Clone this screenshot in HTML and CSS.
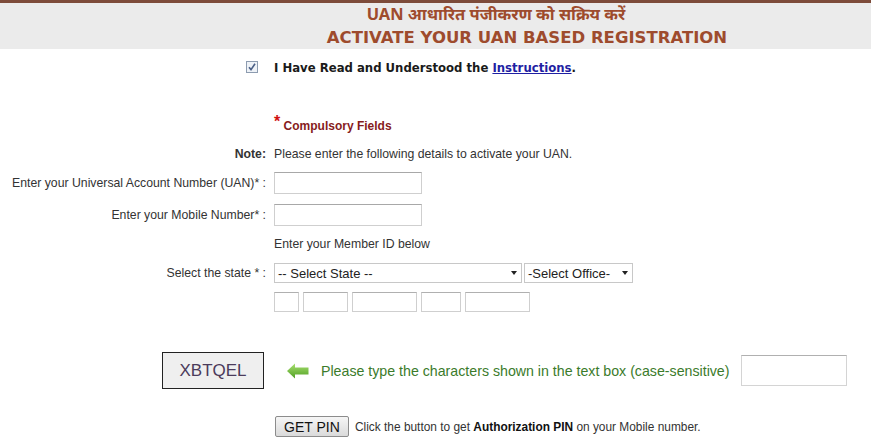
FILE: index.html
```html
<!DOCTYPE html>
<html lang="en">
<head>
<meta charset="utf-8">
<title>Activate UAN</title>
<link rel="stylesheet" href="styles.css">
</head>
<body>
<div class="header">
  <div class="hi">UAN आधारित पंजीकरण को सक्रिय करें</div>
  <div class="en">ACTIVATE YOUR UAN BASED REGISTRATION</div>
</div>

<div class="row agree-row">
  <div class="lbl">
    <span class="check"><svg width="12" height="12" viewBox="0 0 12 12"><rect x="0.5" y="0.5" width="11" height="11" fill="#eef2f7" stroke="#8d9cb0"/><path d="M3 6.2 L5 8.6 L9 2.8" fill="none" stroke="#4a5f86" stroke-width="1.6"/></svg></span>
  </div>
  <div class="val agree">I Have Read and Understood the <a href="#">Instructions</a>.</div>
</div>

<div class="row compulsory-row">
  <div class="lbl"></div>
  <div class="val compulsory"><span class="ast">*</span> Compulsory Fields</div>
</div>

<div class="row note-row">
  <div class="lbl note">Note:</div>
  <div class="val">Please enter the following details to activate your UAN.</div>
</div>

<div class="row field-row">
  <div class="lbl">Enter your Universal Account Number (UAN)* :</div>
  <div class="val"><input class="text" type="text"></div>
</div>

<div class="row field-row">
  <div class="lbl">Enter your Mobile Number* :</div>
  <div class="val"><input class="text" type="text"></div>
</div>

<div class="row member-row">
  <div class="lbl"></div>
  <div class="val">Enter your Member ID below</div>
</div>

<div class="row state-row">
  <div class="lbl">Select the state * :</div>
  <div class="val selects">
    <div class="select state"><span>-- Select State --</span><i class="tri"></i></div>
    <div class="select office"><span>-Select Office-</span><i class="tri"></i></div>
  </div>
</div>

<div class="row ids-row">
  <div class="lbl"></div>
  <div class="val ids">
    <input class="idbox w1" type="text">
    <input class="idbox w2" type="text">
    <input class="idbox w3" type="text">
    <input class="idbox w4" type="text">
    <input class="idbox w5" type="text">
  </div>
</div>

<div class="captcha-row">
  <div class="captcha">XBTQEL</div>
  <svg class="arrow" width="22" height="16" viewBox="0 0 22 16">
    <defs>
      <linearGradient id="g" x1="0" y1="0" x2="0" y2="1">
        <stop offset="0" stop-color="#a8e070"/>
        <stop offset="1" stop-color="#4f9e22"/>
      </linearGradient>
    </defs>
    <path d="M0 8 L8 0.5 L8 4.5 L21.5 4.5 L21.5 11.5 L8 11.5 L8 15.5 Z" fill="url(#g)"/>
  </svg>
  <div class="captcha-text">Please type the characters shown in the text box (case-sensitive)</div>
  <input class="captcha-input" type="text">
</div>

<div class="row pin-row">
  <div class="lbl"></div>
  <div class="val pin">
    <button class="btn" type="button">GET PIN</button>
    <span class="pin-text">Click the button to get <b>Authorization PIN</b> on your Mobile number.</span>
  </div>
</div>
</body>
</html>
```

FILE: styles.css
```css
body {
  margin: 0;
  background: #fff;
  font-family: "Liberation Sans", Arial, sans-serif;
  font-size: 12.25px;
  color: #333;
}

.header {
  box-sizing: border-box;
  border-top: 3px solid #7d4b3a;
  background: #ebebeb;
  height: 49px;
  padding: 2px 0 0 183px;
  display: flex;
  flex-direction: column;
  align-items: center;
  color: #9e4b2d;
  font-weight: bold;
  font-family: "DejaVu Sans", Verdana, sans-serif;
}

.hi {
  font-size: 16.5px;
  line-height: 22px;
  margin-right: 62px;
  font-family: "Noto Sans Devanagari", "Lohit Devanagari", "DejaVu Sans", sans-serif;
}

.en {
  font-size: 16.5px;
  line-height: 22px;
}

.row {
  display: flex;
  align-items: center;
}

.lbl {
  width: 266px;
  flex: none;
  text-align: right;
  white-space: nowrap;
}

.val {
  margin-left: 8px;
  white-space: nowrap;
}

.agree-row {
  margin-top: 11px;
  height: 16px;
}

.check {
  display: inline-flex;
  padding-right: 8px;
}

.agree {
  font-family: "DejaVu Sans", Verdana, sans-serif;
  font-weight: bold;
  font-size: 11.7px;
  color: #1a1a1a;
}

.agree a {
  color: #1f1fa3;
}

.compulsory-row {
  margin-top: 41px;
  height: 16px;
}

.compulsory {
  color: #861c1c;
  font-weight: bold;
  font-size: 12px;
}

.ast {
  color: #d01010;
  font-size: 16px;
  position: relative;
  top: -3px;
}

.note-row {
  margin-top: 13px;
  height: 16px;
}

.note {
  font-weight: bold;
}

.field-row {
  margin-top: 10px;
}

.text {
  box-sizing: border-box;
  width: 148px;
  height: 22px;
  border: 1px solid #cfcfcf;
  border-top-color: #a8a8a8;
  margin: 0;
  display: block;
}

.member-row {
  margin-top: 10px;
  height: 16px;
}

.state-row {
  margin-top: 11px;
}

.selects {
  display: flex;
  gap: 2px;
}

.select {
  box-sizing: border-box;
  height: 20px;
  border: 1px solid #c8c8c8;
  background: #fff;
  display: flex;
  align-items: center;
  justify-content: space-between;
  padding: 0 4px 0 3px;
  font-size: 13px;
  color: #222;
}

.select.state {
  width: 248px;
}

.select.office {
  width: 109px;
}

.tri {
  width: 0;
  height: 0;
  border-left: 3.5px solid transparent;
  border-right: 3.5px solid transparent;
  border-top: 4px solid #222;
  margin-right: 0;
}

.ids-row {
  margin-top: 9px;
}

.ids {
  display: flex;
  gap: 4px;
}

.idbox {
  box-sizing: border-box;
  height: 20px;
  margin: 0;
  border: 1px solid #cfcfcf;
  border-top-color: #b0b0b0;
}

.w1 { width: 25px; }
.w2 { width: 45px; }
.w3 { width: 65px; }
.w4 { width: 40px; }
.w5 { width: 65px; }

.captcha-row {
  margin-top: 40px;
  padding-left: 162px;
  display: flex;
  align-items: center;
}

.captcha {
  box-sizing: border-box;
  width: 102px;
  height: 37px;
  border: 1px solid #222;
  background: #efefef;
  color: #4b3b5b;
  font-size: 17px;
  display: flex;
  align-items: center;
  justify-content: center;
}

.arrow {
  margin-left: 23px;
}

.captcha-text {
  margin-left: 12px;
  color: #3b7b2b;
  font-size: 14.2px;
  white-space: nowrap;
}

.captcha-input {
  box-sizing: border-box;
  margin: 0 0 0 11px;
  width: 106px;
  height: 31px;
  border: 1px solid #d4d4d4;
  border-top-color: #b0b0b0;
}

.pin-row {
  margin-top: 27px;
}

.pin {
  display: flex;
  align-items: center;
  gap: 6px;
}

.btn {
  box-sizing: border-box;
  margin-left: 1px;
  width: 74px;
  height: 21px;
  padding: 0;
  border: 1px solid #8c8c8c;
  border-radius: 2px;
  background: linear-gradient(#f6f6f6, #dadada);
  font-family: "Liberation Sans", Arial, sans-serif;
  font-size: 14px;
  color: #111;
}

.pin-text {
  font-size: 11.9px;
}

.pin b {
  color: #111;
}
```
